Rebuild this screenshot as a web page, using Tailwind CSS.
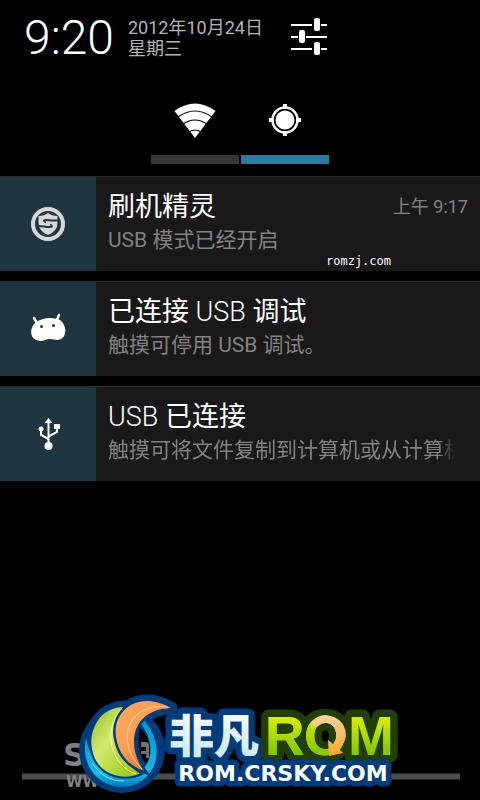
<!DOCTYPE html>
<html lang="zh-CN">
<head>
    <meta charset="UTF-8">
    <meta name="viewport" content="width=device-width, initial-scale=1.0">
    <title>通知</title>
    <script src="https://cdn.jsdelivr.net/npm/@tailwindcss/browser@4"></script>
</head>
<body class="bg-black font-['Roboto','Noto_Sans_CJK_SC',sans-serif] text-white">
<div class="flex min-h-screen flex-col">

    <!-- Cabecera: reloj, fecha y ajustes -->
    <header class="flex h-[75px] items-center pl-6">
        <time class="text-5xl font-light">9:20</time>
        <p class="ml-3.5 text-lg/[21px] text-[#b4b4b4]">2012年10月24日<br>星期三</p>
        <button type="button" aria-label="设置" class="ml-6">
            <svg class="h-10 w-10" viewBox="0 0 40 40" fill="#fff">
                <path d="M4 6h21v2H4zM34 6h6v2h-6zM4 18h7v2H4zM19 18h21v2H19zM4 30h21v2H4zM34 30h6v2h-6z"/>
                <rect x="27" y="0" width="6" height="13" rx="2"/>
                <rect x="12" y="12" width="6" height="13" rx="2"/>
                <rect x="27" y="24" width="6" height="13" rx="2"/>
            </svg>
        </button>
    </header>

    <!-- Interruptores -->
    <div class="flex h-[101px] justify-center gap-0.5 pt-5">
        <button type="button" aria-label="WLAN" class="flex h-[69px] w-22 flex-col items-center justify-between border-b-9 border-[#363636]">
            <svg class="mt-2 h-9 w-11" viewBox="0 0 44 36">
                <path fill="#fff" d="M1.500 8Q22-7 42.500 8L22 35z"/>
                <path fill="none" stroke="#000" stroke-width="1.200" d="M5 14Q22 2 39 14M10 21Q22 13 34 21M16 29Q22 25 28 29"/>
            </svg>
        </button>
        <button type="button" aria-label="GPS" class="flex h-[69px] w-22 flex-col items-center justify-between border-b-9 border-[#257fa1]">
            <svg class="mt-2 h-9 w-9" viewBox="0 0 36 36">
                <path fill="#fff" d="M16 1h4v5h-4zM16 28h4v5h-4zM2 15h5v4H2zM29 15h5v4h-5z"/>
                <circle cx="18" cy="17" r="12.500" fill="none" stroke="#fff" stroke-width="2.500"/>
                <circle cx="18" cy="17" r="9.500" fill="#fff"/>
            </svg>
        </button>
    </div>

    <!-- Lista de notificaciones -->
    <main class="flex flex-col gap-2.5">
        <article class="relative flex h-[95px] border-t border-[#2b2b2b] bg-[#191919]">
            <div class="flex w-24 shrink-0 items-center justify-center bg-[#1f3640]">
                <svg class="h-9 w-9" viewBox="0 0 36 36">
                    <circle cx="18" cy="18" r="15" fill="none" stroke="#d8d8d8" stroke-width="4"/>
                    <path fill="#d8d8d8" d="M18 7q4 3 9.500 3v7q0 8-9.500 12q-9.500-4-9.500-12v-7q5.500 0 9.500-3z"/>
                    <path fill="none" stroke="#1f3640" stroke-width="1.800" d="M29 14.500h-7q-6-1-8 0q0 1.500 2 2M7 20l7 .5q6 1 8 0q0-1.500-2-2"/>
                </svg>
            </div>
            <div class="min-w-0 flex-1 px-3 pt-3">
                <div class="flex items-center justify-between">
                    <h2 class="text-[27px]/9 font-light"><span class="font-normal">刷机精灵</span></h2>
                    <time class="text-lg text-[#828282]">上午 9:17</time>
                </div>
                <p class="text-[21px]/[30px] text-[#828282]">USB 模式已经开启</p>
            </div>
            <span class="absolute bottom-0.5 left-[326px] font-['DejaVu_Sans_Mono',monospace] text-xs/4">romzj.com</span>
        </article>

        <article class="flex h-[95px] border-t border-[#2b2b2b] bg-[#191919]">
            <div class="flex w-24 shrink-0 items-center justify-center bg-[#1f3640]">
                <svg class="h-9 w-9" viewBox="0 0 36 36">
                    <path fill="none" stroke="#fff" stroke-width="2.500" stroke-linecap="round" d="M4 7l3 5M29 4l-2 5"/>
                    <path fill="#fff" d="M6 11Q18 4 30 9C38 15 37 29 27 29Q23 28 18 28Q14 30 10 30C-1 29-1 17 6 11z"/>
                    <circle cx="11.500" cy="15.500" r="1.500" fill="#1f3640"/>
                    <circle cx="23.500" cy="14.500" r="1.500" fill="#1f3640"/>
                </svg>
            </div>
            <div class="min-w-0 flex-1 px-3 pt-3">
                <h2 class="text-[27px]/9 font-light"><span class="font-normal">已连接</span> USB <span class="font-normal">调试</span></h2>
                <p class="text-[21px]/[30px] text-[#828282]">触摸可停用 USB 调试。</p>
            </div>
        </article>

        <article class="flex h-[95px] border-t border-[#2b2b2b] bg-[#191919]">
            <div class="flex w-24 shrink-0 items-center justify-center bg-[#1f3640]">
                <svg class="h-9 w-9" viewBox="0 0 36 36">
                    <g fill="none" stroke="#fff" stroke-width="2">
                        <path d="M18.500 28V6"/>
                        <path d="M11 14v5l7.500 4M27 11v5l-8.500 4.500"/>
                    </g>
                    <path fill="#fff" d="M18.500 2l4 5h-8zM24 8h6v5h-6z"/>
                    <circle cx="11" cy="13" r="2.500" fill="#fff"/>
                    <circle cx="18.500" cy="30" r="4" fill="#fff"/>
                </svg>
            </div>
            <div class="min-w-0 flex-1 pr-6 pl-3 pt-3">
                <h2 class="text-[27px]/9 font-light">USB <span class="font-normal">已连接</span></h2>
                <p class="overflow-hidden text-[21px]/[30px] whitespace-nowrap text-[#828282] mask-r-from-95%">触摸可将文件复制到计算机或从计算机</p>
            </div>
        </article>
    </main>

    <!-- Tirador y logotipo -->
    <footer class="mt-auto">
        <svg class="w-full" viewBox="0 0 480 120">
            <defs>
                <linearGradient id="lime" x2="0" y2="1"><stop stop-color="#f4fb00"/><stop offset="1" stop-color="#65b800"/></linearGradient>
                <linearGradient id="leaf" x2="1" y2="1"><stop stop-color="#83b81c"/><stop offset=".4" stop-color="#d5ea70"/><stop offset="1" stop-color="#8cc000"/></linearGradient>
                <linearGradient id="orange" x2="1" y2="1"><stop stop-color="#f9a860"/><stop offset=".4" stop-color="#f9a055"/><stop offset="1" stop-color="#d04f08"/></linearGradient>
                <linearGradient id="ice" x2="0" y2="1"><stop stop-color="#fff"/><stop offset="1" stop-color="#c3e6fa"/></linearGradient>
                <linearGradient id="sea" x2="0" y2="1"><stop stop-color="#0090d8"/><stop offset=".8" stop-color="#18bce0"/><stop offset="1" stop-color="#0073bd"/></linearGradient>
                <linearGradient id="gold" x2="0" y2="1"><stop stop-color="#ffd49a"/><stop offset="1" stop-color="#f4a62b"/></linearGradient>
            </defs>
            <path fill="#4c4c4c" d="M22 93.500h438v6H22z"/>
            <g fill="#808080" font-family="DejaVu Sans, sans-serif" font-weight="700">
                <text x="63" y="86" font-size="32">S</text>
                <text x="66" y="107" font-size="15">WW</text>
            </g>

            <!-- emblema -->
            <circle cx="122" cy="70" r="43" fill="#003b7a"/>
            <g fill="#003b7a" stroke="#003b7a" stroke-width="13" stroke-linejoin="round">
                <path d="M124 27C98 28 84 55 95 79C104 96 124 101 139 94C116 78 107 48 124 27z"/>
                <path d="M171 28C137 9 112 32 116 57C119 76 130 86 144 91C127 68 129 30 171 28z"/>
            </g>
            <path fill="#000" d="M140 48Q150 56 150 73Q149 80 146 84Q135 70 140 48z"/>
            <path fill="#707070" d="M141 62h5q3 0 3 3v13h-3v-4h-5v-3h5v-4h-5z"/>
            <path fill="url(#sea)" d="M86 58C80 86 99 107 122 107C151 107 171 72 144 40L141 44C160 69 149 97 122 97C103 97 91 82 86 58z"/>
            <path fill="none" stroke="#7fdcf5" d="M92 83Q105 102 124 101"/>
            <path fill="url(#leaf)" stroke="#003b7a" stroke-width="2" d="M125 26C96 26 84 55 94 79C103 97 124 102 142 94C118 78 107 48 125 26z"/>
            <path fill="none" stroke="#f0f7ba" d="M122 29C101 52 112 86 136 94"/>
            <path fill="url(#orange)" stroke="#003b7a" stroke-width="5" paint-order="stroke" d="M171 28C137 9 112 32 116 57C119 76 130 86 144 91C127 68 129 30 171 28z"/>
            <path fill="none" stroke="#ffd3a4" d="M168 27C126 22 115 63 142 89"/>

            <!-- rótulo -->
            <g stroke-linejoin="round" paint-order="stroke">
                <text x="169" y="73" font-family="Noto Sans CJK SC, sans-serif" font-weight="900" font-size="45" fill="url(#ice)" stroke="#003b7a" stroke-width="13">非凡</text>
                <g id="rom" font-family="Liberation Sans, sans-serif" font-weight="700" font-size="55" fill="url(#lime)" stroke="#213f05">
                    <g stroke-width="15">
                        <text id="rom-r" x="265" y="75">R</text>
                        <text id="rom-o" x="304" y="75">O</text>
                        <text id="rom-m" x="348" y="75">M</text>
                    </g>
                    <g stroke-width="0">
                        <use href="#rom-r"/>
                        <use href="#rom-o"/>
                    </g>
                </g>
                <text x="283" y="101" text-anchor="middle" font-family="DejaVu Sans, sans-serif" font-weight="700" font-size="22" fill="#fff" stroke="#003b7a" stroke-width="11">ROM.CRSKY.COM</text>
            </g>
            <path fill="url(#gold)" d="M310 44Q316 35 326 35Q336 36 342 43Q351 57 339 69L343 73L329 76L328 60L333 64Q339 57 334 47Q326 39 317 47z"/>
        </svg>
    </footer>
</div>
</body>
</html>
